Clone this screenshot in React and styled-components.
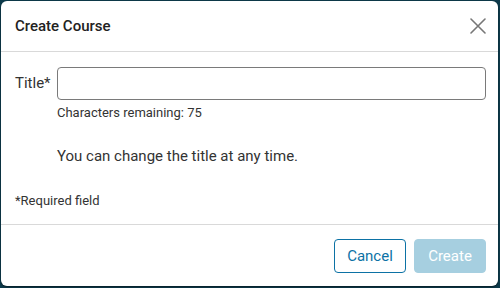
import styled, { createGlobalStyle } from "styled-components"

const Global = createGlobalStyle`
    html, body {
        margin: 0;
        background: #0d3a4b;
        font-family: Roboto, "Liberation Sans", sans-serif;
    }
`

const Backdrop = styled.div`
    width: 500px;
    height: 288px;
    padding: 1px 2px 2px 1px;
    box-sizing: border-box;
    display: flex;
`

const Dialog = styled.section`
    flex: 1;
    display: flex;
    flex-direction: column;
    background: #fff;
    border-radius: 6px;
    box-shadow: 0 1px 2px rgba(0, 0, 0, 0.5);
    color: #333;
`

const Header = styled.header`
    display: flex;
    align-items: center;
    justify-content: space-between;
    height: 50px;
    padding: 0 12px 0 14px;
    border-bottom: 1px solid #d9d9d9;
`

const Title = styled.h2`
    margin: 0;
    font-size: 15px;
    font-weight: 500;
    color: #222;
`

const Close = styled.button`
    border: 0;
    background: none;
    padding: 0;
    display: flex;
    color: #777;
    cursor: pointer;
`

const Body = styled.div`
    flex: 1;
    padding: 15px 12px 0 14px;
    display: flex;
    flex-direction: column;
`

const Row = styled.div`
    display: flex;
    align-items: flex-start;
    gap: 6px;
`

const Label = styled.label`
    font-size: 15px;
    line-height: 32px;
    width: 36px;
    color: #333;
`

const Field = styled.div`
    flex: 1;
    display: flex;
    flex-direction: column;
`

const Input = styled.input`
    height: 33px;
    box-sizing: border-box;
    border: 1px solid #7a7a7a;
    border-radius: 4px;
    font: inherit;
    padding: 0 8px;
`

const Hint = styled.p`
    margin: 5px 0 0;
    font-size: 13px;
    line-height: 15px;
    color: #333;
`

const Note = styled.p`
    margin: 27px 0 0;
    font-size: 15px;
    line-height: 18px;
    color: #333;
`

const Required = styled.p`
    margin: 28px 0 0;
    font-size: 13px;
    line-height: 15px;
    color: #333;
`

const Footer = styled.footer`
    display: flex;
    justify-content: flex-end;
    gap: 8px;
    height: 62px;
    box-sizing: border-box;
    padding: 14px 12px 0;
    border-top: 1px solid #d9d9d9;
`

const Button = styled.button`
    height: 34px;
    min-width: 72px;
    box-sizing: border-box;
    border-radius: 4px;
    font-family: inherit;
    font-size: 15px;
    padding: 0 12px;
    border: 1px solid ${p => (p.$primary ? "#a6cfe0" : "#0c72a5")};
    background: ${p => (p.$primary ? "#a6cfe0" : "#fff")};
    color: ${p => (p.$primary ? "#fff" : "#0c72a5")};
`

function CloseIcon() {
    return (
        <svg width="16" height="16" viewBox="0 0 16 16" fill="none" stroke="currentColor" strokeWidth="1.6" strokeLinecap="round">
            <path d="M1 1 L15 15 M15 1 L1 15" />
        </svg>
    )
}

export default function App() {
    return (
        <>
            <Global />
            <Backdrop>
                <Dialog>
                    <Header>
                        <Title>Create Course</Title>
                        <Close aria-label="Close">
                            <CloseIcon />
                        </Close>
                    </Header>
                    <Body>
                        <Row>
                            <Label>Title*</Label>
                            <Field>
                                <Input />
                                <Hint>Characters remaining: 75</Hint>
                                <Note>You can change the title at any time.</Note>
                            </Field>
                        </Row>
                        <Required>*Required field</Required>
                    </Body>
                    <Footer>
                        <Button>Cancel</Button>
                        <Button $primary disabled>Create</Button>
                    </Footer>
                </Dialog>
            </Backdrop>
        </>
    )
}
